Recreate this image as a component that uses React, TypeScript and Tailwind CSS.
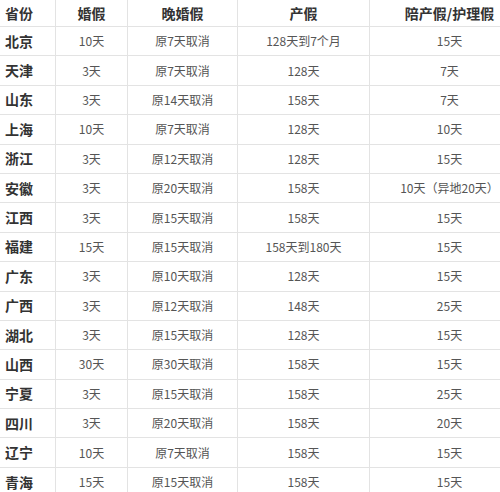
const rows: [string, string, string, string, string][] = [
  ["北京", "10天", "原7天取消", "128天到7个月", "15天"],
  ["天津", "3天", "原7天取消", "128天", "7天"],
  ["山东", "3天", "原14天取消", "158天", "7天"],
  ["上海", "10天", "原7天取消", "128天", "10天"],
  ["浙江", "3天", "原12天取消", "128天", "15天"],
  ["安徽", "3天", "原20天取消", "158天", "10天（异地20天）"],
  ["江西", "3天", "原15天取消", "158天", "15天"],
  ["福建", "15天", "原15天取消", "158天到180天", "15天"],
  ["广东", "3天", "原10天取消", "128天", "15天"],
  ["广西", "3天", "原12天取消", "148天", "25天"],
  ["湖北", "3天", "原15天取消", "128天", "15天"],
  ["山西", "30天", "原30天取消", "158天", "15天"],
  ["宁夏", "3天", "原15天取消", "158天", "25天"],
  ["四川", "3天", "原20天取消", "158天", "20天"],
  ["辽宁", "10天", "原7天取消", "158天", "15天"],
  ["青海", "15天", "原15天取消", "158天", "15天"],
];

const headers = ["省份", "婚假", "晚婚假", "产假", "陪产假/护理假"];

export default function App() {
  return (
    <div
      className="w-[500px] h-[492px] overflow-hidden bg-white"
      style={{ fontFamily: '"Noto Sans CJK SC", "Noto Sans", sans-serif' }}
    >
      <table className="ml-[-1px] mt-[-1px] w-[530px] table-fixed border-collapse">
        <colgroup>
          <col className="w-[56px]" />
          <col className="w-[72px]" />
          <col className="w-[110px]" />
          <col className="w-[132px]" />
          <col className="w-[160px]" />
        </colgroup>
        <thead>
          <tr className="h-[27px]">
            {headers.map((h, i) => (
              <th
                key={h}
                className={`border border-[#e3e3e3] p-0 text-[14px] font-bold text-[#333] ${
                  i === 0 ? "pl-[5px] text-left" : "text-center"
                }`}
              >
                {h}
              </th>
            ))}
          </tr>
        </thead>
        <tbody>
          {rows.map((r) => (
            <tr key={r[0]} className="h-[29.4px]">
              <td className="border border-[#e3e3e3] p-0 pl-[5px] text-left text-[14px] font-bold text-[#333]">
                {r[0]}
              </td>
              {r.slice(1).map((c, i) => (
                <td
                  key={i}
                  className="border border-[#e3e3e3] p-0 text-center text-[12px] text-[#555]"
                >
                  {c}
                </td>
              ))}
            </tr>
          ))}
        </tbody>
      </table>
    </div>
  );
}
